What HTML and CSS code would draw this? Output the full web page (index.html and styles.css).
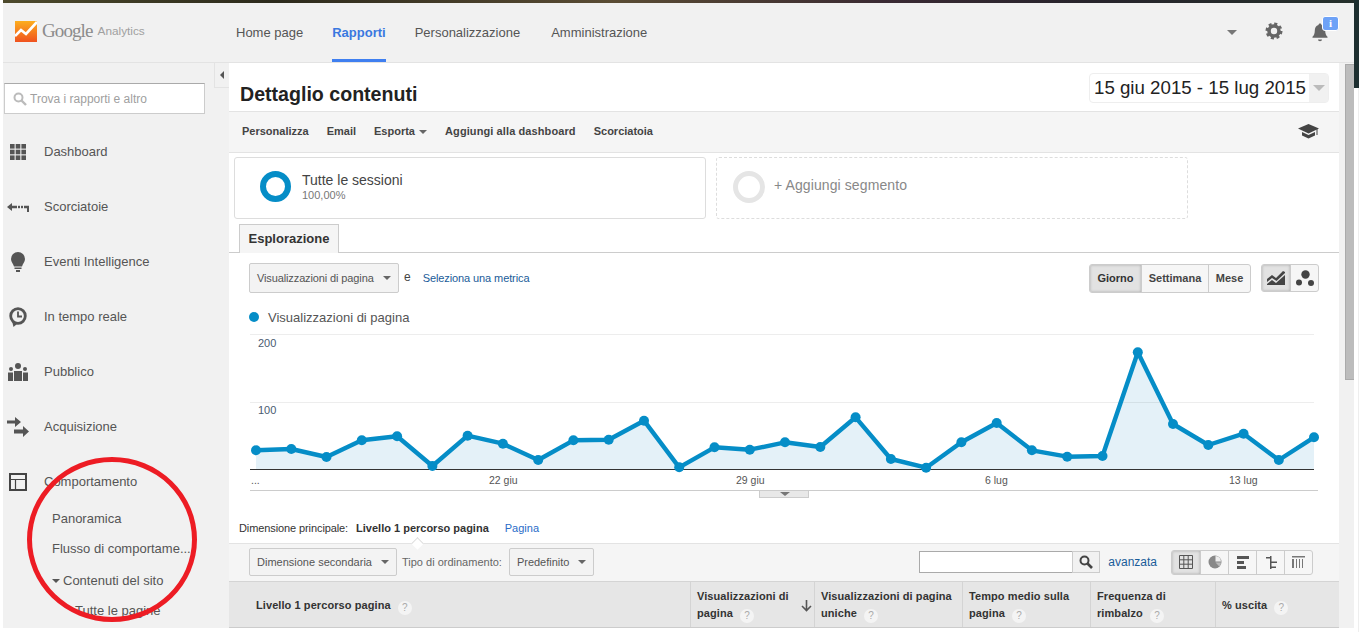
FILE: index.html
```html
<!DOCTYPE html>
<html lang="it">
<head>
  <meta charset="UTF-8" />
  <title>Dettaglio contenuti - Google Analytics</title>
  <link rel="stylesheet" href="styles.css">
</head>

<body>
  <!-- Sfondo del desktop dietro la finestra -->
  <div class="desk-top"></div>
  <div class="desk-right"></div>
  <div class="desk-edge"></div>

  <div class="app">
    <header class="topbar">
      <div class="logo">
        <svg class="logo-mark" width="22" height="21" viewBox="0 0 22 21">
          <defs>
            <linearGradient id="logoGrad" x1="0" y1="0" x2="0" y2="1">
              <stop offset="0" stop-color="#fcae1e"/>
              <stop offset="1" stop-color="#f0521f"/>
            </linearGradient>
          </defs>
          <rect width="22" height="21" fill="url(#logoGrad)"/>
          <polyline points="0,15 6,9 11,13 22,1" fill="none" stroke="#fff" stroke-width="2.6"/>
        </svg>
        <span class="logo-google">Google</span>
        <span class="logo-product">Analytics</span>
      </div>
      <nav class="topnav">
        <a class="topnav-link">Home page</a>
        <a class="topnav-link active">Rapporti</a>
        <a class="topnav-link">Personalizzazione</a>
        <a class="topnav-link">Amministrazione</a>
      </nav>
      <div class="topbar-right">
        <span class="caret caret-account"></span>
        <svg class="gear" width="18" height="18" viewBox="0 0 18 18">
          <circle cx="9" cy="9" r="5" fill="none" stroke="#666" stroke-width="3.6"/>
          <circle cx="9" cy="9" r="7.2" fill="none" stroke="#666" stroke-width="2.6" stroke-dasharray="3.05 2.6"/>
        </svg>
        <div class="bell">
          <svg width="20" height="20" viewBox="0 0 20 20">
            <path d="M10 1.5c.9 0 1.4.6 1.5 1.4 2.6.7 3.7 2.9 3.7 5.6 0 3.2.8 4.8 2.3 6.3v1H2.5v-1c1.5-1.5 2.3-3.1 2.3-6.3 0-2.700 1.1-4.900 3.7-5.600.1-.8.6-1.400 1.500-1.400z" fill="#666"/>
            <path d="M8 17.5h4c0 1-.9 1.7-2 1.7s-2-.7-2-1.700z" fill="#666"/>
          </svg>
          <span class="bell-badge">i</span>
        </div>
      </div>
    </header>

    <div class="layout">
      <aside class="sidebar">
        <div class="collapse-tab"><span class="caret-left"></span></div>
        <div class="search-box">
          <svg width="14" height="14" viewBox="0 0 14 14">
            <circle cx="5.5" cy="5.5" r="4" fill="none" stroke="#bbb" stroke-width="2"/>
            <line x1="8.5" y1="8.5" x2="13" y2="13" stroke="#bbb" stroke-width="2.4"/>
          </svg>
          <span>Trova i rapporti e altro</span>
        </div>

        <ul class="side-nav">
          <li class="side-item">
            <span class="side-icon">
              <svg width="16" height="16" viewBox="0 0 16 16" fill="#555">
                <rect width="4.6" height="4.6"/><rect x="5.7" width="4.6" height="4.6"/><rect x="11.4" width="4.6" height="4.6"/>
                <rect y="5.7" width="4.6" height="4.6"/><rect x="5.7" y="5.7" width="4.6" height="4.6"/><rect x="11.4" y="5.7" width="4.6" height="4.6"/>
                <rect y="11.4" width="4.6" height="4.6"/><rect x="5.7" y="11.4" width="4.6" height="4.6"/><rect x="11.4" y="11.4" width="4.6" height="4.6"/>
              </svg>
            </span>
            Dashboard
          </li>
          <li class="side-item">
            <span class="side-icon">
              <svg width="22" height="10" viewBox="0 0 22 10" fill="#555">
                <path d="M0 5l5-4v2.800h5v2.400H5V9z"/>
                <rect x="11" y="3.8" width="2" height="2.4"/><rect x="14" y="3.8" width="2" height="2.4"/>
                <path d="M17 3.800h5V10h-2V6.200h-3z"/>
              </svg>
            </span>
            Scorciatoie
          </li>
          <li class="side-item">
            <span class="side-icon">
              <svg width="14" height="20" viewBox="0 0 14 20" fill="#555">
                <path d="M7 0a7 7 0 0 1 7 7c0 3-2.200 4.300-3 7.500H3C2.200 11.300 0 10 0 7a7 7 0 0 1 7-7z"/>
                <rect x="3.5" y="15.5" width="7" height="1.5"/><rect x="5" y="18" width="4" height="2"/>
              </svg>
            </span>
            Eventi Intelligence
          </li>
          <li class="side-item">
            <span class="side-icon">
              <svg width="18" height="20" viewBox="0 0 18 20">
                <circle cx="9" cy="9" r="7.3" fill="none" stroke="#555" stroke-width="2.8"/>
                <path d="M3 14l1.500 6 4-3.500z" fill="#555"/>
                <path d="M9 4.500V9.500H13" fill="none" stroke="#555" stroke-width="1.8"/>
              </svg>
            </span>
            In tempo reale
          </li>
          <li class="side-item">
            <span class="side-icon">
              <svg width="20" height="18" viewBox="0 0 20 18" fill="#555">
                <circle cx="10" cy="3" r="3"/><circle cx="3" cy="6" r="2"/><circle cx="17" cy="6" r="2"/>
                <path d="M6 8h8v10H6z"/><path d="M0 9.500h5V18H0z"/><path d="M15 9.500h5V18h-5z"/>
              </svg>
            </span>
            Pubblico
          </li>
          <li class="side-item">
            <span class="side-icon">
              <svg width="22" height="21" viewBox="0 0 22 21" fill="#555">
                <path d="M0 4.500h8V1l6 5-6 5V7.500H0z"/>
                <path d="M7 13.500h9V10l6 5.500-6 5.500v-3.500H7z"/>
              </svg>
            </span>
            Acquisizione
          </li>
          <li class="side-item">
            <span class="side-icon">
              <svg width="18" height="18" viewBox="0 0 18 18" fill="none" stroke="#444" stroke-width="2">
                <rect x="1" y="1" width="16" height="16"/>
                <path d="M1 6.500h16M6.500 6.500V17" stroke-width="1.2"/>
              </svg>
            </span>
            Comportamento
          </li>
        </ul>
        <ul class="side-sub">
          <li class="side-sub-item">Panoramica</li>
          <li class="side-sub-item">Flusso di comportame...</li>
          <li class="side-sub-item group"><span class="caret caret-sub"></span>Contenuti del sito</li>
          <li class="side-sub-item deep">Tutte le pagine</li>
        </ul>
        <div class="red-circle"></div>
      </aside>

      <main class="main">
        <div class="title-row">
          <h1>Dettaglio contenuti</h1>
          <div class="date-range">
            <span>15 giu 2015 - 15 lug 2015</span>
            <span class="date-arrow"><span class="caret caret-date"></span></span>
          </div>
        </div>

        <div class="actions">
          <a>Personalizza</a>
          <a>Email</a>
          <a>Esporta <span class="caret caret-small"></span></a>
          <a class="action-wide">Aggiungi alla dashboard</a>
          <a>Scorciatoia</a>
          <svg class="cap" width="21" height="15" viewBox="0 0 21 15" fill="#444">
            <path d="M10.5 0L21 4.500 10.500 9.500 0 4.500z"/>
            <path d="M4 8l6.500 3L17 8v3.500l-6.500 3-6.500-3z"/>
            <rect x="18.5" y="5" width="1" height="6"/>
          </svg>
        </div>

        <div class="segments">
          <div class="segment">
            <span class="ring ring-on"></span>
            <div>
              <div class="segment-name">Tutte le sessioni</div>
              <div class="segment-pct">100,00%</div>
            </div>
          </div>
          <div class="segment add">
            <span class="ring ring-off"></span>
            <div class="segment-add">+ Aggiungi segmento</div>
          </div>
        </div>

        <div class="tabs"><span class="tab">Esplorazione</span></div>

        <div class="metric-row">
          <div class="dropdown metric">Visualizzazioni di pagina<span class="caret caret-small"></span></div>
          <span class="metric-e">e</span>
          <a class="metric-link">Seleziona una metrica</a>
          <div class="btn-group period">
            <span class="btn on">Giorno</span>
            <span class="btn">Settimana</span>
            <span class="btn">Mese</span>
          </div>
          <div class="btn-group chart-type">
            <span class="btn on">
              <svg width="19" height="17" viewBox="0 0 19 17" fill="#444">
                <path d="M0 9l5-4 4 3 7-7 2 1v1l-8.500 8L5 8 0 12z"/>
                <path d="M0 14l5-4 4 3 9-8v10H0z"/>
              </svg>
            </span>
            <span class="btn">
              <svg width="18" height="17" viewBox="0 0 18 17" fill="#444">
                <circle cx="9.5" cy="4.5" r="4.2"/><circle cx="3" cy="12.5" r="3"/><circle cx="15" cy="13" r="3"/>
              </svg>
            </span>
          </div>
        </div>

        <div class="legend"><span class="legend-dot"></span>Visualizzazioni di pagina</div>

        <!-- Il viewBox usa le coordinate della pagina -->
        <svg class="chart" width="1110" height="170" viewBox="229 330 1110 170">
          <polygon class="chart-area" points="256,469 256,450.3 291.3,449 326.5,457 361.8,440.3 397.1,436.3 432.4,466 467.6,435.7 502.9,443.7 538.2,460 573.4,440.3 608.7,439.7 644,420.7 679.2,467.3 714.5,447.3 749.8,449.7 785,442.3 820.3,447 855.6,417.3 890.9,459 926.1,467.7 961.4,442.3 996.7,423 1031.9,450.3 1067.2,456.7 1102.5,456 1137.8,352.3 1173,424 1208.3,445 1243.6,433.7 1278.8,460 1314,437.3 1314,469"/>
          <line class="chart-grid" x1="250" x2="1314" y1="334.5" y2="334.5"/>
          <line class="chart-grid" x1="250" x2="1314" y1="402.5" y2="402.5"/>
          <line class="chart-base" x1="250" x2="1314" y1="469.5" y2="469.5"/>
          <polyline class="chart-line" points="256,450.3 291.3,449 326.5,457 361.8,440.3 397.1,436.3 432.4,466 467.6,435.7 502.9,443.7 538.2,460 573.4,440.3 608.7,439.7 644,420.7 679.2,467.3 714.5,447.3 749.8,449.7 785,442.3 820.3,447 855.6,417.3 890.9,459 926.1,467.7 961.4,442.3 996.7,423 1031.9,450.3 1067.2,456.7 1102.5,456 1137.8,352.3 1173,424 1208.3,445 1243.6,433.7 1278.8,460 1314,437.3"/>
          <g class="chart-dots">
            <circle cx="256" cy="450.3" r="5"/><circle cx="291.3" cy="449" r="5"/><circle cx="326.5" cy="457" r="5"/><circle cx="361.8" cy="440.3" r="5"/>
            <circle cx="397.1" cy="436.3" r="5"/><circle cx="432.4" cy="466" r="5"/><circle cx="467.6" cy="435.7" r="5"/><circle cx="502.9" cy="443.7" r="5"/>
            <circle cx="538.2" cy="460" r="5"/><circle cx="573.4" cy="440.3" r="5"/><circle cx="608.7" cy="439.7" r="5"/><circle cx="644" cy="420.7" r="5"/>
            <circle cx="679.2" cy="467.3" r="5"/><circle cx="714.5" cy="447.3" r="5"/><circle cx="749.8" cy="449.7" r="5"/><circle cx="785" cy="442.3" r="5"/>
            <circle cx="820.3" cy="447" r="5"/><circle cx="855.6" cy="417.3" r="5"/><circle cx="890.9" cy="459" r="5"/><circle cx="926.1" cy="467.7" r="5"/>
            <circle cx="961.4" cy="442.3" r="5"/><circle cx="996.7" cy="423" r="5"/><circle cx="1031.9" cy="450.3" r="5"/><circle cx="1067.2" cy="456.7" r="5"/>
            <circle cx="1102.5" cy="456" r="5"/><circle cx="1137.8" cy="352.3" r="5"/><circle cx="1173" cy="424" r="5"/><circle cx="1208.3" cy="445" r="5"/>
            <circle cx="1243.6" cy="433.7" r="5"/><circle cx="1278.8" cy="460" r="5"/><circle cx="1314" cy="437.3" r="5"/>
          </g>
          <text class="chart-y" x="258" y="347">200</text>
          <text class="chart-y" x="258" y="414">100</text>
          <text class="chart-x" x="251" y="484">...</text>
          <text class="chart-x" x="489" y="484">22 giu</text>
          <text class="chart-x" x="736" y="484">29 giu</text>
          <text class="chart-x" x="985" y="484">6 lug</text>
          <text class="chart-x" x="1229" y="484">13 lug</text>
          <line class="chart-bottom" x1="250" x2="1318" y1="490.5" y2="490.5"/>
          <rect class="chart-handle" x="759.5" y="490.5" width="49" height="7"/>
          <polygon points="780,492 790,492 785,496" fill="#777"/>
        </svg>

        <div class="dimension-row">
          <span class="dim-label">Dimensione principale:</span>
          <b>Livello 1 percorso pagina</b>
          <a>Pagina</a>
          <span class="dim-notch"></span>
        </div>

        <div class="table-tools">
          <div class="dropdown secondary">Dimensione secondaria<span class="caret caret-small"></span></div>
          <span class="sort-label">Tipo di ordinamento:</span>
          <div class="dropdown sort">Predefinito<span class="caret caret-small"></span></div>
          <div class="table-search">
            <span class="table-input"></span>
            <span class="table-go">
              <svg width="14" height="14" viewBox="0 0 14 14">
                <circle cx="5.5" cy="5.5" r="4" fill="none" stroke="#444" stroke-width="2"/>
                <line x1="8.5" y1="8.5" x2="13" y2="13" stroke="#444" stroke-width="2.6"/>
              </svg>
            </span>
          </div>
          <a class="advanced">avanzata</a>
          <div class="btn-group views">
            <span class="btn on">
              <svg width="14" height="14" viewBox="0 0 14 14" fill="none" stroke="#555">
                <path d="M.5.500h13v13H.5zM.5 4.800h13M.5 9.200h13M4.800.500v13M9.200.500v13"/>
              </svg>
            </span>
            <span class="btn">
              <svg width="14" height="14" viewBox="0 0 14 14">
                <circle cx="7" cy="7" r="6.5" fill="#888"/>
                <path d="M7.500 1v5.500H13A6 6 0 0 0 7.500 1z" fill="#eee"/>
                <path d="M7.500 7.500H13a6 6 0 0 1-1.700 4z" fill="#bbb"/>
              </svg>
            </span>
            <span class="btn">
              <svg width="12" height="13" viewBox="0 0 12 13" fill="#555">
                <rect width="12" height="3"/><rect y="5" width="7" height="3"/><rect y="10" width="9" height="3"/>
              </svg>
            </span>
            <span class="btn">
              <svg width="12" height="13" viewBox="0 0 12 13" fill="#555">
                <rect x="5" width="1.5" height="13"/><rect x="1" y="1" width="5" height="1.5"/><rect x="5" y="5.5" width="7" height="1.5"/><rect x="5" y="10.5" width="6" height="1.5"/>
              </svg>
            </span>
            <span class="btn">
              <svg width="13" height="12" viewBox="0 0 13 12" fill="#777">
                <rect width="13" height="1.5"/><rect y="3" width="2" height="9"/><rect x="4" y="3" width="1" height="9"/><rect x="7" y="3" width="1" height="9"/><rect x="10" y="3" width="1" height="9"/>
              </svg>
            </span>
          </div>
        </div>

        <div class="table-head">
          <div class="th first"><span class="th-text">Livello 1 percorso pagina <span class="help">?</span></span></div>
          <div class="th">
            <span class="th-text">Visualizzazioni di<br>pagina <span class="help">?</span></span>
            <svg class="sort-arrow" width="11" height="12" viewBox="0 0 11 12" fill="none" stroke="#555" stroke-width="1.6"><path d="M5.5 0v10M1 6l4.500 4.500L10 6"/></svg>
          </div>
          <div class="th"><span class="th-text">Visualizzazioni di pagina<br>uniche <span class="help">?</span></span></div>
          <div class="th"><span class="th-text">Tempo medio sulla<br>pagina <span class="help">?</span></span></div>
          <div class="th"><span class="th-text">Frequenza di<br>rimbalzo <span class="help">?</span></span></div>
          <div class="th"><span class="th-text">% uscita <span class="help">?</span></span></div>
        </div>
      </main>

      <div class="scrollbar"><div class="scroll-thumb"></div></div>
    </div>
  </div>
</body>
</html>
```

FILE: styles.css
```css
/* Palette: grigio #f1f1f1 per le barre, blu #058dc7 per il grafico */
* {
  box-sizing: border-box;
}

body {
  margin: 0;
  height: 632px;
  overflow: hidden;
  background: #fff;
  font-family: "Liberation Sans", Arial, sans-serif;
  color: #444;
  position: relative;
}

ul {
  margin: 0;
  padding: 0;
  list-style: none;
}

/* Sfondo del desktop */
.desk-top {
  position: absolute;
  top: 0;
  left: 3px;
  width: 1356px;
  height: 3px;
  background: linear-gradient(90deg, #4d4a2c, #2c2a1c 20%, #5a4c34 45%, #3a2a33 65%, #27242c 80%, #25302c);
}
.desk-right {
  position: absolute;
  top: 0;
  left: 1354px;
  width: 5px;
  height: 88px;
  background: #1d2f30;
}
.desk-edge {
  position: absolute;
  top: 88px;
  left: 1358px;
  width: 1px;
  height: 544px;
  background: #eee;
}

.app {
  position: absolute;
  top: 3px;
  left: 3px;
  width: 1351px;
  height: 625px;
  display: flex;
  flex-direction: column;
}

/* Barra superiore */
.topbar {
  height: 60px;
  flex: none;
  display: flex;
  background: #f1f1f1;
  border-bottom: 1px solid #e3e3e3;
}
.logo {
  width: 233px;
  flex: none;
  display: flex;
  align-items: center;
  padding: 0 0 3px 12px;
}
.logo-mark {
  flex: none;
}
.logo-google {
  font-family: "Liberation Serif", serif;
  font-size: 19px;
  color: #8c8c8c;
  margin-left: 5px;
  letter-spacing: -0.9px;
}
.logo-product {
  font-size: 11.8px;
  color: #a0a0a0;
  margin-left: 5px;
}
.topnav {
  display: flex;
  gap: 29px;
  flex: 1;
}
.topnav-link {
  font-size: 13px;
  line-height: 59px;
  height: 59px;
  color: #555;
}
.topnav-link:last-child {
  margin-left: 2px;
}
.topnav-link.active {
  color: #3a78e0;
  font-weight: bold;
  border-bottom: 3px solid #3f7ff0;
}
.topbar-right {
  display: flex;
  align-items: center;
  padding: 0 24px 1px 0;
}
.caret {
  display: inline-block;
  width: 0;
  height: 0;
  border-left: 5px solid transparent;
  border-right: 5px solid transparent;
  border-top: 5px solid #777;
}
.caret-account {
  margin-right: 28px;
}
.gear {
  margin: -2px 27px 0 0;
}
.bell {
  position: relative;
  width: 20px;
  height: 20px;
}
.bell-badge {
  position: absolute;
  top: -6px;
  left: 12px;
  width: 17px;
  height: 15px;
  border: 1px solid #fff;
  border-radius: 3px;
  background: #6ea2f7;
  color: #fff;
  font-family: "Liberation Serif", serif;
  font-size: 11px;
  font-weight: bold;
  line-height: 13px;
  text-align: center;
}

.layout {
  flex: 1;
  display: flex;
  min-height: 0;
}

/* Colonna sinistra */
.sidebar {
  position: relative;
  width: 226px;
  flex: none;
  background: #f1f1f1;
  padding-top: 20px;
}
.collapse-tab {
  position: absolute;
  top: 0;
  right: 0;
  width: 15px;
  height: 25px;
  display: flex;
  align-items: center;
  justify-content: center;
  border: 1px solid #e3e3e3;
  border-top: 0;
  border-right: 0;
  background: #f1f1f1;
}
.caret-left {
  width: 0;
  height: 0;
  border-top: 4px solid transparent;
  border-bottom: 4px solid transparent;
  border-right: 4px solid #555;
}
.search-box {
  width: 201px;
  height: 31px;
  margin-left: 1px;
  display: flex;
  align-items: center;
  gap: 3px;
  padding-left: 8px;
  background: #fff;
  border: 1px solid #ccc;
  border-top-color: #aaa;
  font-size: 12px;
  color: #a0a0a0;
}
.side-nav {
  margin-top: 10px;
}
.side-item {
  height: 55px;
  display: flex;
  align-items: center;
  font-size: 13px;
  color: #555;
}
.side-icon {
  width: 24px;
  margin: 0 14px 0 3px;
  display: flex;
  justify-content: center;
  flex: none;
}
.side-sub {
  margin-top: -5px;
}
.side-sub-item {
  height: 30px;
  line-height: 30px;
  padding-left: 49px;
  font-size: 13px;
  color: #555;
}
.side-sub-item.group {
  margin-top: 2px;
}
.side-sub-item.deep {
  padding-left: 72px;
}
.caret-sub {
  border-left-width: 4px;
  border-right-width: 4px;
  border-top: 4px solid #555;
  margin-right: 3px;
  vertical-align: 2px;
}

/* Cerchio rosso disegnato sopra lo screenshot */
.red-circle {
  position: absolute;
  left: 24px;
  top: 394px;
  width: 170px;
  height: 165px;
  border: 5px solid #ed1c24;
  border-radius: 50%;
  pointer-events: none;
}

/* Contenuto */
.main {
  width: 1110px;
  flex: none;
  background: #fff;
  display: flex;
  flex-direction: column;
}
.title-row {
  height: 49px;
  flex: none;
  display: flex;
  align-items: center;
  justify-content: space-between;
  padding: 0 10px 0 11px;
  border-bottom: 1px solid #e3e3e3;
}
h1 {
  margin: 14px 0 0;
  font-size: 19.6px;
  color: #222;
}
.date-range {
  width: 240px;
  height: 30px;
  margin-top: 2px;
  display: flex;
  align-items: center;
  border: 1px solid #eee;
  border-radius: 4px;
  font-size: 18.7px;
  white-space: nowrap;
  color: #222;
  padding-left: 4px;
  justify-content: space-between;
}
.date-arrow {
  width: 19px;
  height: 28px;
  display: flex;
  align-items: center;
  justify-content: center;
  background: #f1f1f1;
}
.caret-date {
  border-left-width: 6px;
  border-right-width: 6px;
  border-top: 6px solid #bbb;
}
.actions {
  height: 41px;
  flex: none;
  display: flex;
  align-items: center;
  gap: 18px;
  padding: 0 20px 2px 13px;
  background: #f5f5f5;
  border-bottom: 1px solid #e3e3e3;
  font-size: 11px;
  font-weight: bold;
  color: #444;
}
.action-wide {
  letter-spacing: 0.1px;
}
.caret-small {
  border-left-width: 4px;
  border-right-width: 4px;
  border-top: 4px solid #666;
  margin-left: 1px;
  vertical-align: 1px;
}
.cap {
  margin-left: auto;
}
.segments {
  height: 71px;
  flex: none;
  display: flex;
  gap: 10px;
  padding: 4px 0 5px 5px;
}
.segment {
  width: 472px;
  display: flex;
  align-items: center;
  border: 1px solid #ddd;
  border-radius: 3px;
  padding: 0 0 3px 25px;
}
.segment.add {
  border-style: dashed;
  padding-left: 16px;
}
.ring {
  border-radius: 50%;
  flex: none;
}
.ring-on {
  width: 31px;
  height: 31px;
  border: 6px solid #058dc7;
  margin-right: 11px;
}
.ring-off {
  width: 32px;
  height: 32px;
  border: 5px solid #e5e5e5;
  margin-right: 9px;
}
.segment-name {
  font-size: 14px;
  color: #444;
}
.segment-pct {
  font-size: 11px;
  color: #777;
  margin-top: 1px;
}
.segment-add {
  font-size: 14px;
  color: #888;
  margin-bottom: 3px;
  letter-spacing: 0.1px;
}
.tabs {
  height: 29px;
  flex: none;
  padding-left: 10px;
  border-bottom: 1px solid #ccc;
}
.tab {
  display: block;
  width: 100px;
  height: 29px;
  border: 1px solid #ccc;
  border-bottom: 0;
  background: #f5f5f5;
  font-size: 13px;
  font-weight: bold;
  line-height: 28px;
  text-align: center;
  color: #333;
}
.metric-row {
  height: 30px;
  flex: none;
  margin-top: 10px;
  display: flex;
  align-items: center;
  padding: 0 20px;
}
.dropdown {
  height: 30px;
  display: flex;
  align-items: center;
  justify-content: space-between;
  padding: 0 7px;
  border: 1px solid #ccc;
  border-radius: 2px;
  background: #f3f3f3;
  font-size: 11px;
  color: #555;
  flex: none;
}
.dropdown.metric {
  width: 150px;
  letter-spacing: -0.12px;
}
.metric-e {
  font-size: 12px;
  margin: -3px 0 0 5px;
}
.metric-link {
  margin-left: 12px;
  font-size: 11px;
  letter-spacing: -0.1px;
  color: #1a5c99;
}
.btn-group {
  display: flex;
  height: 29px;
  border: 1px solid #ccc;
  border-radius: 3px;
  overflow: hidden;
  background: #f6f6f6;
}
.btn {
  display: flex;
  align-items: center;
  justify-content: center;
  border-left: 1px solid #ccc;
  font-size: 11px;
  font-weight: bold;
  color: #444;
}
.btn:first-child {
  border-left: 0;
}
.btn.on {
  background: #e2e2e2;
  box-shadow: inset 0 0 3px #aaa;
  color: #333;
}
.period {
  margin-left: auto;
}
.period .btn:nth-child(1) {
  width: 51px;
}
.period .btn:nth-child(2) {
  width: 67px;
}
.period .btn:nth-child(3) {
  width: 42px;
}
.chart-type {
  margin-left: 10px;
  height: 28px;
}
.chart-type .btn {
  width: 28px;
}
.legend {
  height: 20px;
  flex: none;
  margin-top: 14px;
  padding-left: 20px;
  display: flex;
  align-items: center;
  font-size: 13px;
  color: #555;
}
.legend-dot {
  width: 10px;
  height: 10px;
  border-radius: 50%;
  background: #058dc7;
  margin-right: 9px;
}

/* Grafico */
.chart {
  display: block;
  flex: none;
  margin-top: 3px;
}
.chart-area {
  fill: #e4f1f8;
}
.chart-grid {
  stroke: #000;
  stroke-opacity: 0.07;
}
.chart-base {
  stroke: #333;
}
.chart-line {
  fill: none;
  stroke: #058dc7;
  stroke-width: 4.4;
  stroke-linejoin: round;
}
.chart-dots {
  fill: #058dc7;
}
.chart-y {
  font-size: 11px;
  fill: #4a5a70;
}
.chart-x {
  font-size: 10.5px;
  fill: #555;
}
.chart-bottom {
  stroke: #ccc;
}
.chart-handle {
  fill: #e8e8e8;
  stroke: #ccc;
}

.dimension-row {
  position: relative;
  height: 44px;
  flex: none;
  display: flex;
  align-items: center;
  padding: 12px 0 0 10px;
  border-bottom: 1px solid #e3e3e3;
  font-size: 11px;
}
.dim-label {
  color: #333;
  letter-spacing: -0.1px;
}
.dimension-row b {
  margin-left: 8px;
  color: #333;
}
.dimension-row a {
  margin-left: 16px;
  color: #2a6cc8;
}
.dim-notch {
  position: absolute;
  left: 184px;
  bottom: -5px;
  width: 9px;
  height: 9px;
  transform: rotate(45deg);
  background: #fff;
  border-left: 1px solid #ddd;
  border-top: 1px solid #ddd;
}
.table-tools {
  height: 37px;
  flex: none;
  display: flex;
  align-items: center;
  padding: 0 26px 1px 20px;
  background: #f5f5f5;
  font-size: 11px;
}
.table-tools .dropdown {
  height: 28px;
}
.dropdown.secondary {
  width: 148px;
}
.dropdown.sort {
  width: 85px;
}
.sort-label {
  color: #666;
  margin: 0 7px 0 5px;
}
.table-search {
  margin-left: auto;
  display: flex;
  height: 22px;
}
.table-input {
  width: 153px;
  background: #fff;
  border: 1px solid #aaa;
  border-right: 0;
}
.table-go {
  width: 28px;
  display: flex;
  align-items: center;
  justify-content: center;
  border: 1px solid #ccc;
  background: #f1f1f1;
}
.advanced {
  margin: 0 14px 0 8px;
  font-size: 12px;
  color: #1a5c99;
}
.views {
  height: 25px;
}
.views .btn {
  width: 28px;
}
.table-head {
  height: 47px;
  flex: none;
  display: grid;
  grid-template-columns: 461px 124px 148px 128px 125px 124px;
  border-top: 1px solid #d4d4d4;
  border-bottom: 1px solid #ccc;
  background: #e6e6e6;
}
.th {
  position: relative;
  display: flex;
  align-items: center;
  padding: 2px 0 0 6px;
  font-size: 11px;
  font-weight: bold;
  line-height: 17px;
  letter-spacing: 0.08px;
  color: #333;
  border-left: 1px solid #d4d4d4;
}
.th.first {
  padding-left: 27px;
  border-left: 0;
}
.help {
  display: inline-block;
  width: 14px;
  height: 14px;
  margin-left: 4px;
  border-radius: 50%;
  background: #f4f4f4;
  color: #aaa;
  font-size: 10px;
  font-weight: normal;
  line-height: 14px;
  text-align: center;
  vertical-align: -2px;
}
.sort-arrow {
  position: absolute;
  right: 2px;
  top: 18px;
}

.scrollbar {
  width: 15px;
  flex: none;
  background: #f1f1f1;
  padding: 1px 0 0 6px;
}
.scroll-thumb {
  width: 9px;
  height: 316px;
  background: #bcbcbc;
  border: 1px solid #aaa;
  border-right: 0;
}
```
